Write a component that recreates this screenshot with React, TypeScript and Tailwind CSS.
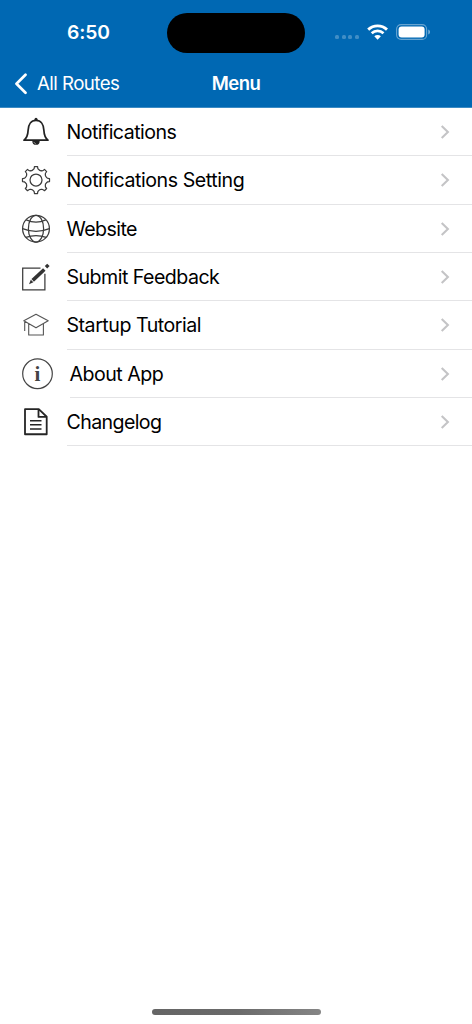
import type { ReactNode } from "react";
import { clsx } from "clsx";

type MenuItem = {
  label: string;
  icon: ReactNode;
  tracking: string;
  inset?: string;
};

function getGearPath(cx: number, cy: number) {
  const at = (angle: number, radius: number) => {
    const rad = (angle * Math.PI) / 180;
    return `${(cx + radius * Math.cos(rad)).toFixed(2)} ${(cy + radius * Math.sin(rad)).toFixed(2)}`;
  };

  let path = "";
  for (let i = 0; i < 8; i++) {
    const base = i * 45 - 90;
    path += `${i === 0 ? "M" : "L"}${at(base - 6.5, 13.6)}`;
    path += `L${at(base + 6.5, 13.6)}`;
    path += `Q${at(base + 8, 11.2)} ${at(base + 14, 10.9)}`;
    path += `Q${at(base + 22.5, 9.8)} ${at(base + 31, 10.9)}`;
    path += `Q${at(base + 37, 11.2)} ${at(base + 38.5, 13.6)}`;
  }

  return `${path}Z`;
}

function Icon({ children }: { children: ReactNode }) {
  return (
    <svg
      viewBox="0 0.35 40 48"
      className="h-12 w-10 shrink-0"
      fill="none"
      stroke="#3c3c3c"
      strokeWidth="1.25"
      strokeLinejoin="round"
    >
      {children}
    </svg>
  );
}

function BellIcon() {
  return (
    <Icon>
      <circle cx="20" cy="11.6" r="1.5" fill="#222" stroke="none" />
      <path
        d="M8 32.5C11.3 29.9 11.9 27.7 12.1 22.7C12.3 17 15 12.8 20 12.8S27.7 17 27.9 22.7C28.1 27.7 28.7 29.9 32 32.5Z"
        stroke="#222"
        strokeWidth="1.7"
      />
      <path d="M16.3 33.3a3.7 3.9 0 0 0 7.4 0z" fill="#222" stroke="none" />
      <path d="M17.8 34.3q.6 1.5 2 1.8" stroke="#aaa" strokeWidth=".8" />
    </Icon>
  );
}

function GearIcon() {
  return (
    <Icon>
      <path d={getGearPath(20, 24.4)} />
      <circle cx="20" cy="24.4" r="6" />
    </Icon>
  );
}

function GlobeIcon() {
  return (
    <Icon>
      <circle cx="20" cy="24" r="13.4" />
      <ellipse cx="20" cy="24" rx="7.6" ry="13.4" />
      <path d="M10.2 15.2q9.8 4.6 19.6 0M6.6 24q13.4 5.4 26.8 0M9.8 32.8q10.2-3.8 20.4 0" />
    </Icon>
  );
}

function FeedbackIcon() {
  return (
    <Icon>
      <path d="M24.5 15.4H6.7v21.8h22.2V21" strokeLinejoin="miter" />
      <path d="m13 31.5 1.8-4.3 2.6 2.4z" fill="#333" stroke="none" />
      <path d="m16.7 27.7 11.6-10.9" stroke="#333" strokeWidth="3.6" />
      <path d="m31.2 11 2.4 2.4-2.4 2.4-2.4-2.4z" fill="#333" stroke="none" />
    </Icon>
  );
}

function TutorialIcon() {
  return (
    <Icon>
      <path
        d="M20 13.7 32.2 20.1 20 27.2 7.8 20.1ZM12.7 23.3V34.3h14.7V23.3M8.7 20.5v9.9"
        stroke="#555"
        strokeWidth="1.1"
      />
    </Icon>
  );
}

function InfoIcon() {
  return (
    <Icon>
      <circle cx="21.5" cy="24.1" r="14.8" stroke="#444" strokeWidth="1.2" />
      <text
        x="21.5"
        y="31.2"
        textAnchor="middle"
        fill="#444"
        stroke="none"
        className="font-['Liberation_Serif',serif] text-[21px] font-bold"
      >
        i
      </text>
    </Icon>
  );
}

function ChangelogIcon() {
  return (
    <Icon>
      <path
        d="M9 11.5h13.8l7.9 7.6v17.5H9ZM22.5 11.5v7.8h8.2"
        stroke="#252525"
        strokeWidth="1.8"
      />
      <path d="M14 23.2h11.5M14 27.2h11.5M14 31.4h11.5" stroke="#252525" strokeWidth="1.5" />
    </Icon>
  );
}

const menuItems: MenuItem[] = [
  { label: "Notifications", icon: <BellIcon />, tracking: "tracking-[-0.55px]" },
  { label: "Notifications Setting", icon: <GearIcon />, tracking: "tracking-[-0.44px]" },
  { label: "Website", icon: <GlobeIcon />, tracking: "tracking-[-0.58px]" },
  { label: "Submit Feedback", icon: <FeedbackIcon />, tracking: "tracking-[-0.53px]" },
  { label: "Startup Tutorial", icon: <TutorialIcon />, tracking: "tracking-[-0.48px]" },
  { label: "About App", icon: <InfoIcon />, tracking: "tracking-[-0.5px]", inset: "ml-[13.5px]" },
  { label: "Changelog", icon: <ChangelogIcon />, tracking: "tracking-[-0.62px]" },
];

function StatusBar() {
  return (
    <div className="flex h-[60px] items-start">
      <span className="mt-5 ml-[67px] w-[100px] text-[19.3px] leading-6 font-semibold tracking-[-0.15px]">
        6:50
      </span>
      <div className="mt-[12.5px] h-[40.5px] w-[138px] rounded-full bg-black" />
      <div className="mt-[35px] ml-[30px] flex gap-[2.6px]">
        <span className="size-1 rounded-[1.5px] bg-white/25" />
        <span className="size-1 rounded-[1.5px] bg-white/25" />
        <span className="size-1 rounded-[1.5px] bg-white/25" />
        <span className="size-1 rounded-[1.5px] bg-white/25" />
      </div>
      <svg viewBox="0 0 22 16" className="mt-[23.5px] ml-2 h-4 w-[22px]" fill="none">
        <path d="M1.2 5.6a13.7 13.7 0 0 1 18.8 0" stroke="white" strokeWidth="2.9" />
        <path d="M4.7 9.3a8.6 8.6 0 0 1 11.8 0" stroke="white" strokeWidth="2.7" />
        <path d="M7.3 12.3a4.7 4.7 0 0 1 6.6 0l-3.3 3.4z" fill="white" />
      </svg>
      <svg viewBox="0 0 36 16" className="mt-6 ml-[7.5px] h-4 w-9" fill="none">
        <rect x=".6" y=".6" width="30" height="14.8" rx="4.5" stroke="white" strokeOpacity=".4" strokeWidth="1.1" />
        <rect x="2.6" y="2.6" width="26" height="10.8" rx="3" fill="white" />
        <path d="M32.3 5.5v5c2.2-.9 2.2-4.1 0-5z" fill="white" fillOpacity=".5" />
      </svg>
    </div>
  );
}

function NavBar() {
  return (
    <div className="grid h-[47px] grid-cols-3 items-center">
      <button className="ml-[14px] flex items-center">
        <svg viewBox="0 0 14 22" className="h-[22px] w-[14px]" fill="none">
          <path d="M11.5 1.7 2.5 10.7l9 9" stroke="white" strokeWidth="2.7" strokeLinecap="round" strokeLinejoin="round" />
        </svg>
        <span className="ml-[9px] text-[18.7px] leading-6 tracking-[-0.55px] whitespace-nowrap">
          All Routes
        </span>
      </button>
      <h1 className="pb-px text-center text-[18.5px] leading-6 font-semibold tracking-[-0.6px]">Menu</h1>
    </div>
  );
}

function MenuRow({ item }: { item: MenuItem }) {
  return (
    <li className="flex h-[48.33px] items-center pl-4">
      {item.icon}
      <div
        className={clsx(
          "flex h-full flex-1 items-center justify-between border-b border-[#e4e4e6] pt-px",
          item.inset ?? "ml-[10.5px]"
        )}
      >
        <span className={clsx("text-[19.6px] leading-6 text-black", item.tracking)}>{item.label}</span>
        <svg viewBox="0 0 10 14" className="mr-[22px] h-[14px] w-[10px]" fill="none">
          <path d="m1.7 1 6.2 6-6.2 6" stroke="#c4c4c6" strokeWidth="2.1" />
        </svg>
      </div>
    </li>
  );
}

export default function App() {
  return (
    <div className="flex h-screen w-[472px] flex-col overflow-hidden bg-white font-['Inter',sans-serif]">
      <header className="h-[108px] shrink-0 border-b border-[#3c8bc4] bg-[#0068b3] text-white">
        <StatusBar />
        <NavBar />
      </header>

      <main className="flex-1">
        <ul>
          {menuItems.map((item) => (
            <MenuRow key={item.label} item={item} />
          ))}
        </ul>
      </main>

      <div className="mx-auto mb-[9px] h-[6px] w-[169px] rounded-full bg-gradient-to-r from-[#656565] via-[#6a6a6a] to-[#858585]" />
    </div>
  );
}
